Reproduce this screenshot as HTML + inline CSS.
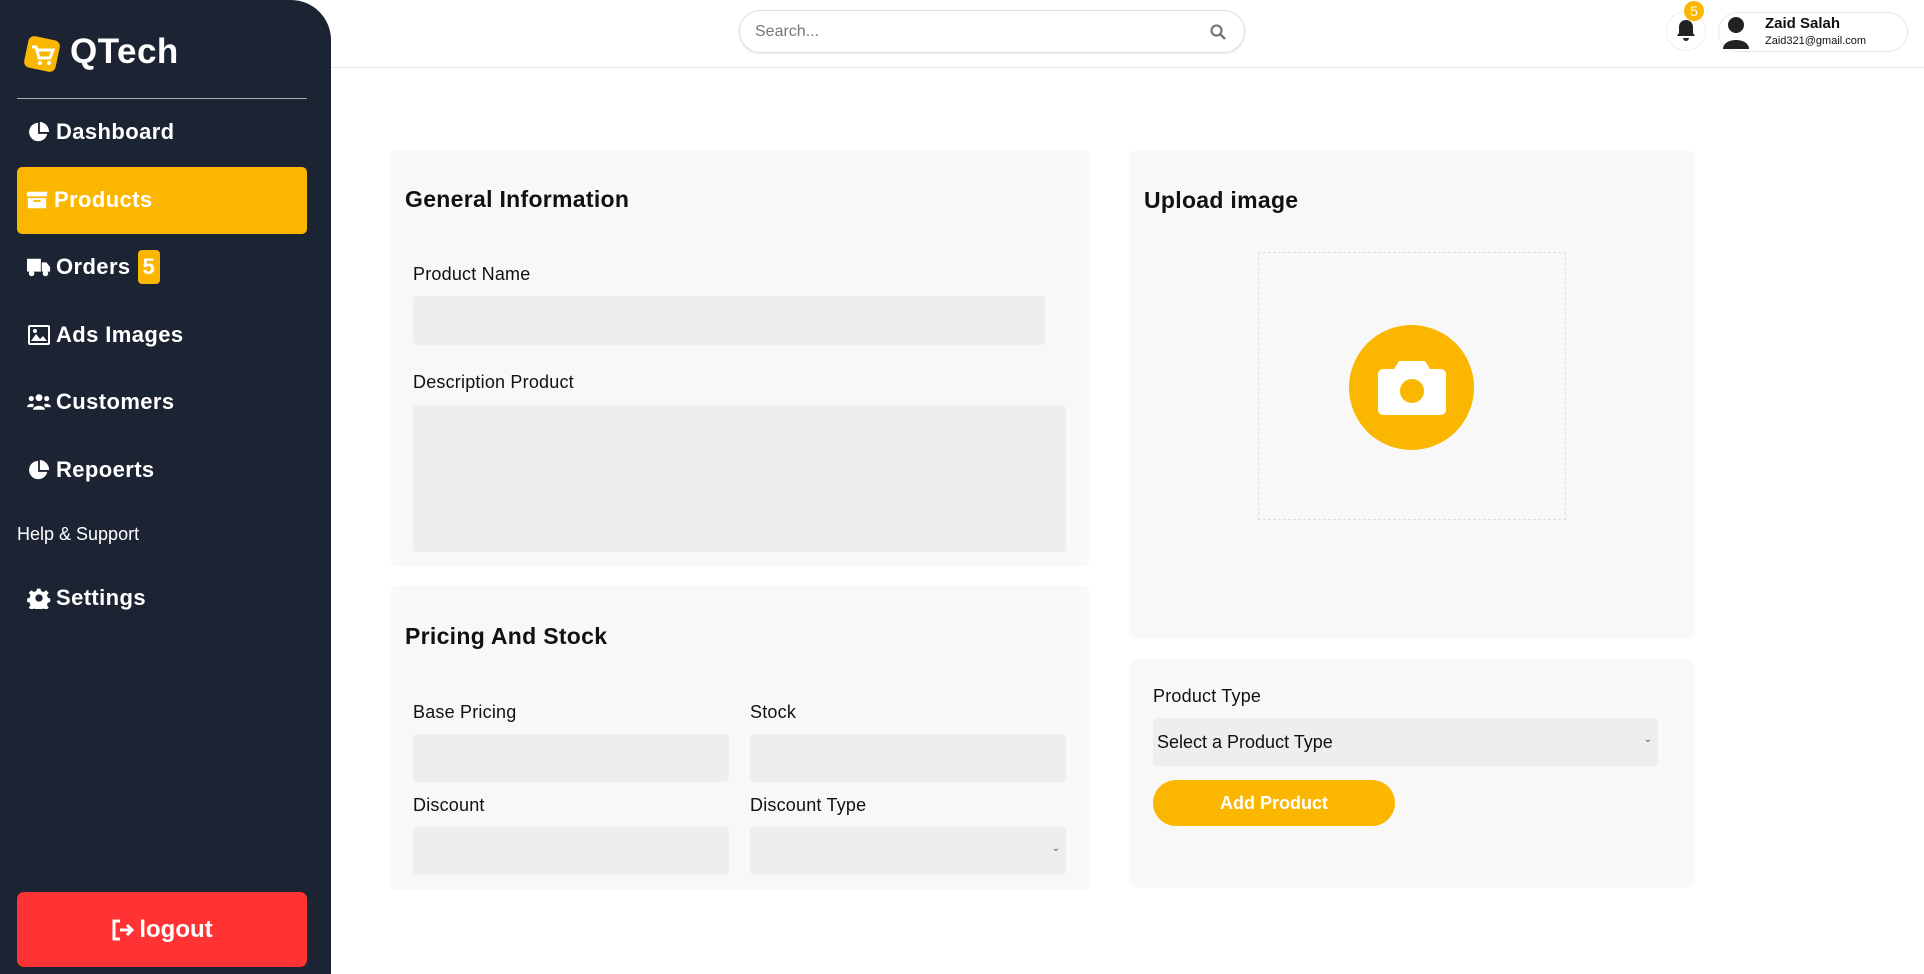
<!DOCTYPE html>
<html><head><meta charset="utf-8"><style>
*{box-sizing:border-box;margin:0;padding:0}
body{width:1924px;height:974px;background:#fff;font-family:"Liberation Sans",sans-serif;position:relative;overflow:hidden;color:#111}
.abs{position:absolute}
.side{left:0;top:0;width:331px;height:974px;background:#1c2434;border-top-right-radius:40px}
.mi{position:absolute;left:27px;color:#fff;font-weight:bold;font-size:22px;letter-spacing:.4px;display:flex;align-items:center;gap:5px;height:30px}
.mi svg{width:24px;height:22px;fill:#fff}
.card{position:absolute;background:#f8f8f8;border-radius:8px}
.h{position:absolute;font-weight:bold;font-size:23px;letter-spacing:.3px;color:#111}
.lb{position:absolute;font-size:18px;color:#111;letter-spacing:.2px}
.in{position:absolute;background:#eee;border-radius:4px}
</style></head><body>
<div class="abs side"></div>
<svg class="abs" style="left:22px;top:34px" width="40" height="40" viewBox="0 0 40 40"><rect x="4" y="4" width="32" height="32" rx="6" fill="#fbb600" transform="rotate(12 20 20)"/><path d="M10 13h4l3 11h11l3-8H16" stroke="#fff" stroke-width="3" fill="none"/><circle cx="18" cy="29" r="2" fill="#fff"/><circle cx="27" cy="29" r="2" fill="#fff"/></svg>
<div class="abs" style="left:70px;top:32px;color:#fff;font-weight:bold;font-size:35px;letter-spacing:.5px">QTech</div>
<div class="abs" style="left:17px;top:98px;width:290px;height:1px;background:#aaa"></div>
<div class="mi" style="top:117px"><svg viewBox="0 0 24 24"><path d="M11 2a10 10 0 1 0 10 12H11z"/><path d="M13 1v11h10A11 11 0 0 0 13 1z"/></svg>Dashboard</div>
<div class="abs" style="left:17px;top:167px;width:290px;height:67px;background:#fbb600;border-radius:5px"></div>
<div class="mi" style="top:185px;left:25px"><svg viewBox="0 0 24 24"><rect x="1" y="3" width="22" height="5"/><path d="M2 10h20v11H2z"/><rect x="8" y="12" width="8" height="2" fill="#fbb600"/></svg>Products</div>
<div class="mi" style="top:252px"><svg viewBox="0 0 26 22"><path d="M0 2h15v14H0zM16 6h5l4 5v5h-9z"/><circle cx="5" cy="18" r="3"/><circle cx="20" cy="18" r="3"/></svg>Orders <span style="background:#fbb600;border-radius:4px;padding:4px 5px;margin-left:2px">5</span></div>
<div class="mi" style="top:320px"><svg viewBox="0 0 24 22"><rect x="1" y="1" width="22" height="20" rx="2"/><rect x="3" y="3" width="18" height="16" fill="#1c2434"/><path d="M4 17l5-7 4 5 3-3 4 5z"/><circle cx="8" cy="7" r="2"/></svg>Ads Images</div>
<div class="mi" style="top:387px"><svg viewBox="0 0 28 22"><circle cx="14" cy="6" r="4"/><circle cx="5" cy="7" r="3"/><circle cx="23" cy="7" r="3"/><path d="M7 20c0-6 14-6 14 0zM0 17c0-4 7-5 8-3l-1 3zM28 17c0-4-7-5-8-3l1 3z"/></svg>Customers</div>
<div class="mi" style="top:455px"><svg viewBox="0 0 24 24"><path d="M11 2a10 10 0 1 0 10 12H11z"/><path d="M13 1v11h10A11 11 0 0 0 13 1z"/></svg>Repoerts</div>
<div class="abs" style="left:17px;top:524px;color:#fff;font-size:18px">Help &amp; Support</div>
<div class="mi" style="top:583px"><svg viewBox="0 0 24 24"><path d="M10 1h4l1 3 3 1 3-2 3 3-2 3 1 3 3 1v0 4l-3 1-1 3 2 3-3 3-3-2-3 1-1 3h-4l-1-3-3-1-3 2-3-3 2-3-1-3-3-1v-4l3-1 1-3-2-3 3-3 3 2 3-1z" transform="scale(.9) translate(1 1)"/><circle cx="12" cy="12" r="4" fill="#1c2434"/></svg>Settings</div>
<div class="abs" style="left:17px;top:892px;width:290px;height:75px;background:#ff3333;border-radius:7px;color:#fff;font-weight:bold;font-size:24px;display:flex;align-items:center;justify-content:center;gap:4px"><svg width="24" height="22" viewBox="0 0 24 22" fill="none" stroke="#fff" stroke-width="3"><path d="M9 2H3v18h6M9 11h12M16 6l5 5-5 5"/></svg>logout</div>

<div class="abs" style="left:331px;top:67px;width:1593px;height:1px;background:#e8e8e8"></div>
<div class="abs" style="left:739px;top:10px;width:506px;height:43px;border:1.5px solid #ddd;border-radius:22px;box-shadow:0 1px 3px rgba(0,0,0,.08)"><span style="position:absolute;left:15px;top:12px;font-size:16px;color:#777">Search...</span><svg style="position:absolute;right:18px;top:13px" width="16" height="16" viewBox="0 0 16 16"><circle cx="6.5" cy="6.5" r="5" stroke="#777" stroke-width="2.2" fill="none"/><path d="M10 10l5 5" stroke="#777" stroke-width="2.5"/></svg></div>
<div class="abs" style="left:1666px;top:11px;width:40px;height:40px;border:1px solid #eee;border-radius:50%"></div>
<svg class="abs" style="left:1676px;top:19px" width="20" height="24" viewBox="0 0 20 24"><path d="M10 1c-4 0-7 3-7 7v6l-2 3h18l-2-3V8c0-4-3-7-7-7z" fill="#222"/><path d="M7 19a3 3 0 0 0 6 0z" fill="#222"/></svg>
<div class="abs" style="left:1684px;top:1px;width:20px;height:20px;border-radius:50%;background:#fbb600;color:#fff;font-size:14px;text-align:center;line-height:20px">5</div>
<div class="abs" style="left:1718px;top:12px;width:190px;height:40px;border:1px solid #e8e8e8;border-radius:20px"></div>
<svg class="abs" style="left:1722px;top:16px" width="28" height="34" viewBox="0 0 28 34"><circle cx="14" cy="9" r="8" fill="#222"/><path d="M1 33c0-12 26-12 26 0z" fill="#222"/></svg>
<div class="abs" style="left:1765px;top:15px;font-size:15px;font-weight:bold">Zaid Salah</div>
<div class="abs" style="left:1765px;top:35px;font-size:11px">Zaid321@gmail.com</div>

<div class="card" style="left:390px;top:150px;width:700px;height:416px"></div>
<div class="h" style="left:405px;top:186px">General Information</div>
<div class="lb" style="left:413px;top:264px">Product Name</div>
<div class="in" style="left:413px;top:296px;width:632px;height:49px"></div>
<div class="lb" style="left:413px;top:372px">Description Product</div>
<div class="in" style="left:413px;top:405px;width:653px;height:147px"></div>

<div class="card" style="left:390px;top:586px;width:700px;height:304px"></div>
<div class="h" style="left:405px;top:623px">Pricing And Stock</div>
<div class="lb" style="left:413px;top:702px">Base Pricing</div>
<div class="in" style="left:413px;top:734px;width:316px;height:48px"></div>
<div class="lb" style="left:750px;top:702px">Stock</div>
<div class="in" style="left:750px;top:734px;width:316px;height:48px"></div>
<div class="lb" style="left:413px;top:795px">Discount</div>
<div class="in" style="left:413px;top:827px;width:316px;height:48px"></div>
<div class="lb" style="left:750px;top:795px">Discount Type</div>
<div class="in" style="left:750px;top:827px;width:316px;height:48px"><span style="position:absolute;right:6px;top:16px;font-size:10px;color:#555">⌄</span></div>

<div class="card" style="left:1129px;top:150px;width:566px;height:488px"></div>
<div class="h" style="left:1144px;top:187px">Upload image</div>
<div class="abs" style="left:1258px;top:252px;width:308px;height:268px;border:1px dashed #ddd"></div>
<div class="abs" style="left:1349px;top:325px;width:125px;height:125px;border-radius:50%;background:#fbb600"></div>
<svg class="abs" style="left:1377px;top:355px" width="70" height="62" viewBox="0 0 70 62"><path d="M22 6h26l5 8h11a5 5 0 0 1 5 5v36a5 5 0 0 1-5 5H6a5 5 0 0 1-5-5V19a5 5 0 0 1 5-5h11z" fill="#fff"/><circle cx="35" cy="36" r="12" fill="#fbb600"/></svg>

<div class="card" style="left:1129px;top:659px;width:566px;height:229px"></div>
<div class="lb" style="left:1153px;top:686px">Product Type</div>
<div class="in" style="left:1153px;top:718px;width:505px;height:48px"><span style="position:absolute;left:4px;top:14px;font-size:18px">Select a Product Type</span><span style="position:absolute;right:6px;top:16px;font-size:10px;color:#555">⌄</span></div>
<div class="abs" style="left:1153px;top:780px;width:242px;height:46px;background:#fbb600;border-radius:23px;color:#fff;font-weight:bold;font-size:18px;text-align:center;line-height:46px">Add Product</div>
</body></html>
